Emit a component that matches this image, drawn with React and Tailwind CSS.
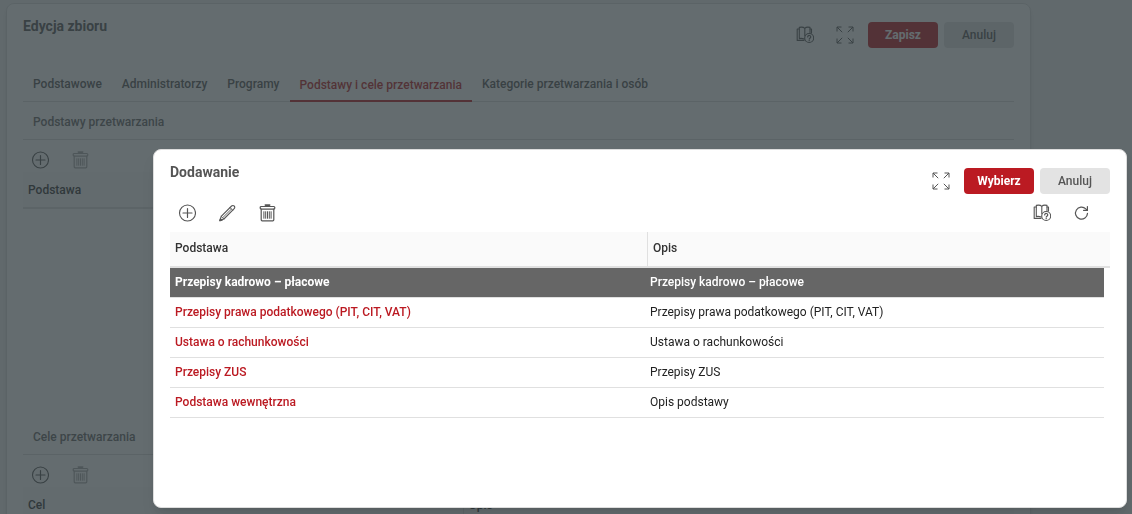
import { useState } from 'react';
import clsx from 'clsx';

const TABS = [
  'Podstawowe',
  'Administratorzy',
  'Programy',
  'Podstawy i cele przetwarzania',
  'Kategorie przetwarzania i osób',
];

const ROWS = [
  { name: 'Przepisy kadrowo – płacowe', description: 'Przepisy kadrowo – płacowe' },
  { name: 'Przepisy prawa podatkowego (PIT, CIT, VAT)', description: 'Przepisy prawa podatkowego (PIT, CIT, VAT)' },
  { name: 'Ustawa o rachunkowości', description: 'Ustawa o rachunkowości' },
  { name: 'Przepisy ZUS', description: 'Przepisy ZUS' },
  { name: 'Podstawa wewnętrzna', description: 'Opis podstawy' },
];

function Icon({ children }) {
  return (
    <svg width="18" height="18" viewBox="0 0 18 18" fill="none" stroke="currentColor" strokeLinecap="round" strokeLinejoin="round" aria-hidden="true">
      {children}
    </svg>
  );
}

function AddIcon() {
  return (
    <Icon>
      <circle cx="9.5" cy="9" r="8" strokeWidth="1.1" />
      <path d="M9.5 4.5v9M5 9h9" strokeWidth="1.2" />
    </Icon>
  );
}

function EditIcon() {
  return (
    <Icon>
      <path d="M1.8 16.6l1.4-4.2L13.6 2a1.8 1.8 0 0 1 2.6 0 1.8 1.8 0 0 1 0 2.6L5.9 15z" strokeWidth="1.1" />
      <path d="M3.2 12.4l2.7 2.6M12 3.6l2.6 2.6M5 13.4l8.4-8.3" strokeWidth="0.9" />
      <path d="M1.8 16.6l.6-2.2 1.7 1.5z" fill="currentColor" />
    </Icon>
  );
}

function TrashIcon() {
  return (
    <Icon>
      <path d="M7.3 1.1h4.4" strokeWidth="1.6" />
      <rect x="2.2" y="2.5" width="14.6" height="2.6" rx="1" strokeWidth="1.2" />
      <path d="M3.2 5.2v10.6a1 1 0 0 0 1 1h10.6a1 1 0 0 0 1-1V5.2" strokeWidth="1.2" />
      <path d="M5.9 7.7v6.6M7.7 7.7v6.6M9.5 7.7v6.6M11.3 7.7v6.6M13.1 7.7v6.6" strokeWidth="1" />
    </Icon>
  );
}

function HelpIcon() {
  return (
    <Icon>
      <path d="M8.8 2.3C7.4.9 5.6.9 3.3 1.4v11.2c2-.4 3.4-.2 4.9.5M8.8 2.3c1.3-1.4 3-1.4 5.2-.9v5.4M8.8 2.3v7.4" strokeWidth="1.1" />
      <path d="M3.2 3H1.200v11.400h6.800M14 3h1.500v4" strokeWidth="1.1" />
      <circle cx="13.2" cy="12" r="4.5" strokeWidth="1.1" />
      <path d="M11.7 11c.1-2.2 3.2-1.9 3 .1-.1 1.1-1.5 1-1.5 2M13.2 14.3v.4" strokeWidth="1.2" />
    </Icon>
  );
}

function ExpandIcon() {
  return (
    <Icon>
      <path d="M1 5.5V1h4.5M1 1l5.2 5.2M12.5 1H17v4.5M17 1l-5.2 5.2M1 12.5V17h4.5M1 17l5.2-5.2M12.5 17H17v-4.5M17 17l-5.2-5.2" strokeLinecap="butt" strokeLinejoin="miter" />
    </Icon>
  );
}

function RefreshIcon() {
  return (
    <Icon>
      <path d="M14.5 9.4A6 6 0 1 1 12.8 4.9L14.2 6.2" strokeWidth="1.2" />
      <path d="M14.4 2.6v3.8H10.6" strokeWidth="1.2" />
    </Icon>
  );
}

function IconButton({ label, children, disabled }) {
  return (
    <button
      type="button"
      aria-label={label}
      disabled={disabled}
      className="w-10 h-6 flex items-center justify-center text-[#555] disabled:opacity-50"
    >
      {children}
    </button>
  );
}

function Button({ children, primary }) {
  return (
    <button
      type="button"
      className={clsx(
        'w-[70px] h-[26px] rounded text-xs',
        primary ? 'bg-[#bb1a22] text-white font-bold' : 'bg-[#e3e3e3] text-[#555] font-medium'
      )}
    >
      {children}
    </button>
  );
}

function Section({ title, column }) {
  return (
    <section className="h-[315px]">
      <h2 className="h-[38px] px-2.5 pt-0.5 flex items-center border-b border-[#d9d9d9] font-medium text-[#666]">
        {title}
      </h2>
      <div className="h-8 -ml-[3px] pt-2 flex">
        <IconButton label="Dodaj"><AddIcon /></IconButton>
        <IconButton label="Usuń" disabled><TrashIcon /></IconButton>
      </div>
      <table className="w-full table-fixed border-collapse text-left">
        <thead>
          <tr className="h-9 bg-[#f9f9f9] border-b-2 border-[#e0e0e0] text-[#333]">
            <th className="w-[440px] px-[5px] font-medium">{column}</th>
            <th className="px-[5px] font-medium border-l border-[#e0e0e0]">Opis</th>
          </tr>
        </thead>
      </table>
    </section>
  );
}

function EditPanel() {
  const [tab, setTab] = useState(3);

  return (
    <main className="h-full bg-[#f3f3f3] pt-[3px] pl-1.5 pr-[101px] overflow-hidden">
      <div className="bg-white border border-[#dcdcdc] rounded-lg px-4 shadow-md">
        <header className="flex justify-between h-[63px]">
          <h1 className="pt-3 text-sm leading-5 font-bold text-[#555]">Edycja zbioru</h1>
          <div className="flex items-center h-[26px] mt-[18px]">
            <IconButton label="Pomoc"><HelpIcon /></IconButton>
            <IconButton label="Pełny ekran"><ExpandIcon /></IconButton>
            <div className="flex gap-1.5 pl-[3px]">
              <Button primary>Zapisz</Button>
              <Button>Anuluj</Button>
            </div>
          </div>
        </header>
        <nav className="flex h-[35px] border-b border-[#d9d9d9]">
          {TABS.map((name, index) => (
            <button
              key={name}
              type="button"
              onClick={() => setTab(index)}
              className={clsx(
                'h-[35px] px-2.5 font-medium border-b-2',
                index === tab ? 'text-[#bb1a22] border-[#bb1a22] pt-0.5' : 'text-[#555] border-transparent'
              )}
            >
              {name}
            </button>
          ))}
        </nav>
        <Section title="Podstawy przetwarzania" column="Podstawa" />
        <Section title="Cele przetwarzania" column="Cel" />
      </div>
    </main>
  );
}

function AddDialog() {
  const [selected, setSelected] = useState(0);

  return (
    <div
      role="dialog"
      aria-labelledby="dialog-title"
      className="w-full px-4 pb-[89px] bg-white border border-[#ddd] rounded-lg shadow-lg"
    >
      <header className="flex justify-between h-[51px]">
        <h2 id="dialog-title" className="pt-3 text-sm leading-5 font-bold text-[#555]">Dodawanie</h2>
        <div className="flex items-center h-[26px] mt-[18px]">
          <IconButton label="Pełny ekran"><ExpandIcon /></IconButton>
          <div className="flex gap-1.5 pl-[3px]">
            <Button primary>Wybierz</Button>
            <Button>Anuluj</Button>
          </div>
        </div>
      </header>
      <div className="flex justify-between h-[31px] -ml-[3px] pr-2">
        <div className="flex">
          <IconButton label="Dodaj"><AddIcon /></IconButton>
          <IconButton label="Edytuj"><EditIcon /></IconButton>
          <IconButton label="Usuń"><TrashIcon /></IconButton>
        </div>
        <div className="flex">
          <IconButton label="Pomoc"><HelpIcon /></IconButton>
          <IconButton label="Odśwież"><RefreshIcon /></IconButton>
        </div>
      </div>
      <table className="w-full table-fixed border-separate border-spacing-0 text-left">
        <thead>
          <tr className="h-9 bg-[#fafafa] text-[#333]">
            <th className="w-[477px] pl-[5px] pb-0.5 border-b-2 border-[#e0e0e0] font-medium">Podstawa</th>
            <th className="pl-[5px] pb-0.5 border-l border-b-2 border-[#e0e0e0] font-medium">Opis</th>
            <td className="w-1.5 p-0 border-b-2 border-[#e0e0e0]"></td>
          </tr>
        </thead>
        <tbody>
          {ROWS.map((row, index) => (
            <tr key={row.name} className="h-[30px]" onClick={() => setSelected(index)}>
              <td
                className={clsx(
                  'pl-[5px] pt-0 pb-0.5 border-b border-[#e0e0e0]',
                  index === selected ? 'bg-[#666] text-white font-bold' : 'text-[#bb1a22] font-medium'
                )}
              >
                <a href="#">{row.name}</a>
              </td>
              <td
                className={clsx(
                  'pl-[3px] pt-0 pb-0.5 border-b border-[#e0e0e0]',
                  index === selected && 'bg-[#666] text-white font-medium'
                )}
              >
                {row.description}
              </td>
            </tr>
          ))}
        </tbody>
      </table>
    </div>
  );
}

export default function App() {
  return (
    <div className="h-screen overflow-hidden font-[Roboto,sans-serif] text-xs text-[#222]">
      <EditPanel />
      <div className="fixed inset-0 flex items-start pt-[149px] pl-[153px] pr-[5px] bg-[#303b3f]/75">
        <AddDialog />
      </div>
    </div>
  );
}
